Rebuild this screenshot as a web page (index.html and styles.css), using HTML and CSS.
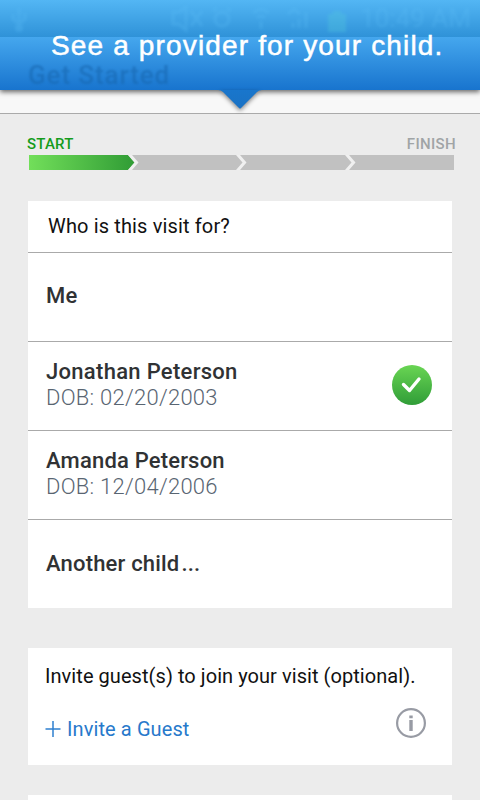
FILE: index.html
```html
<!DOCTYPE html>
<html lang="en">
<head>
<meta charset="utf-8">
<title>Get Started</title>
<link rel="stylesheet" href="styles.css">
</head>
<body>
<header class="header">
  <div class="status">
    <svg class="status-icons" viewBox="0 0 360 37" aria-hidden="true">
      <g fill="none" stroke="#5bbcf6" stroke-width="3">
        <path d="M19 8v22M13 14v5l6 5 6-5v-6"/>
        <path d="M173 12h6l7-5v23l-7-6h-6zM191 11l11 15M202 11l-11 15"/>
        <circle cx="222" cy="19" r="7"/>
        <path d="M213 11l4-3M227 8l4 3"/>
        <path d="M253 13q8-7 16 0M257 18q4-4 8 0M261 21v8"/>
        <path d="M288 14l6-5 6 5M293 28v-5M299 28v-9M306 28v-16"/>
      </g>
      <circle cx="19" cy="28" r="4" fill="#5bbcf6"/>
      <path d="M328 14h5v-3h8v3h5v18h-18z" fill="#56cddc"/>
    </svg>
    <span class="clock">10:49 AM</span>
  </div>
  <div class="titlebar"><h1 class="page-title">Get Started</h1></div>
  <div class="appbar"></div>
  <svg class="pointer" viewBox="0 0 60 30" aria-hidden="true">
    <defs><linearGradient id="tip" x1="0" y1="0" x2="0" y2="1"><stop offset="0" stop-color="#1976cc"/><stop offset="1" stop-color="#1a72c4"/></linearGradient></defs>
    <path d="M8 0h44q-3 0-5 2L31 18q-1 1-2 0L13 2q-2-2-5-2z" fill="url(#tip)"/>
  </svg>
  <p class="banner-text">See a provider for your child.</p>
</header>

<main class="content">
  <div class="labels"><span class="start">START</span><span class="finish">FINISH</span></div>
  <svg class="progress" viewBox="0 0 425 15" aria-hidden="true">
    <defs><linearGradient id="done"><stop offset="0" stop-color="#72df5a"/><stop offset="1" stop-color="#309c35"/></linearGradient></defs>
    <path d="M0 0h425v15H0z" fill="#c1c1c1"/>
    <path d="M0 0h99l6.500 7.500L99 15H0z" fill="url(#done)"/>
    <g fill="#f0f0f0">
      <path d="M99 0h4l6.500 7.500L103 15h-4l6.500-7.500z"/>
      <path d="M207 0h4l6.500 7.500L211 15h-4l6.500-7.500z"/>
      <path d="M316 0h4l6.500 7.500L320 15h-4l6.500-7.500z"/>
    </g>
  </svg>

  <section class="card">
    <h2 class="question">Who is this visit for?</h2>
    <div class="row"><div class="name">Me</div></div>
    <div class="row">
      <div><div class="name jonathan">Jonathan Peterson</div><div class="dob">DOB: 02/20/2003</div></div>
      <svg class="check" viewBox="0 0 40 40" aria-hidden="true">
        <defs><linearGradient id="ok" x1="0" y1="0" x2="0" y2="1"><stop offset="0" stop-color="#69d553"/><stop offset="1" stop-color="#309d38"/></linearGradient></defs>
        <circle cx="20" cy="20" r="20" fill="url(#ok)"/>
        <path d="M11.500 19.500l6 6L27 14" fill="none" stroke="#fff" stroke-width="3.400" stroke-linecap="round" stroke-linejoin="round"/>
      </svg>
    </div>
    <div class="row">
      <div><div class="name">Amanda Peterson</div><div class="dob">DOB: 12/04/2006</div></div>
    </div>
    <div class="row another"><div class="name">Another child<span class="dots">...</span></div></div>
  </section>

  <section class="card invite">
    <p class="invite-text">Invite guest(s) to join your visit (optional).</p>
    <div class="invite-row">
      <a class="invite-link"><svg class="plus" viewBox="0 0 16 16" aria-hidden="true"><path d="M.500 8h15M8 0v16" stroke="#2f80d0" stroke-width="1.500"/></svg>Invite a Guest</a>
      <svg class="info" viewBox="0 0 30 30" aria-hidden="true">
        <circle cx="15" cy="15" r="13.900" fill="none" stroke="#989ba4" stroke-width="2.200"/>
        <path d="M13.300 7.500h3.400v2.700h-3.400zM13.300 12h3.400v11h-3.400z" fill="#989ba4"/>
      </svg>
    </div>
  </section>
  <section class="card next"></section>
</main>
</body>
</html>
```

FILE: styles.css
```css
* { box-sizing: border-box; margin: 0; padding: 0; }
body { width: 480px; height: 800px; overflow: hidden; background: #ececec; font-family: Roboto, sans-serif; }
.header { position: relative; height: 114px; background: #f8f8f8; border-bottom: 1px solid #aaa; }
.status { position: relative; height: 37px; background: linear-gradient(#53b6f4, #2f92d8); }
.status-icons { position: absolute; left: 0; top: 0; width: 360px; height: 37px; opacity: .3; filter: blur(1.4px); }
.clock { position: absolute; right: 9px; top: 7px; font-size: 26px; line-height: 22px; color: #5bbcf6; opacity: .32; filter: blur(1.4px); white-space: nowrap; }
.titlebar { height: 53px; padding: 24px 0 0 28px; background: linear-gradient(#45a7ee, #1874ce); box-shadow: 0 2px 5px rgba(0,0,0,.6); }
.page-title { font-size: 26px; line-height: 28px; font-weight: 500; letter-spacing: .9px; color: #1767b0; opacity: .6; filter: blur(.8px); }
.appbar { height: 23px; }
.pointer { position: absolute; left: 210px; top: 90px; width: 60px; height: 30px; filter: drop-shadow(0 2px 2px rgba(0,0,0,.45)); }
.banner-text { position: absolute; left: 51px; top: 33px; font: 28px/26px "Liberation Sans", sans-serif; letter-spacing: 1.15px; color: #fff; -webkit-text-stroke: .5px #fff; white-space: nowrap; }
.content { padding: 22px 28px 0; }
.labels { display: flex; justify-content: space-between; margin: 0 -4px 0 -1px; height: 19px; font-size: 15px; line-height: 17px; font-weight: 500; }
.start { color: #159c1c; letter-spacing: .2px; }
.finish { color: #a0a4a6; letter-spacing: .35px; }
.progress { display: block; width: 425px; height: 15px; margin-left: 1px; }
.card { background: #fff; margin-top: 31px; }
.question { height: 51px; padding-left: 20px; font-size: 20px; line-height: 50px; font-weight: 400; letter-spacing: .14px; color: #111; }
.row { height: 89px; border-top: 1px solid #aaa; padding: 0 20px 2px 18px; display: flex; align-items: center; justify-content: space-between; }
.another { padding-bottom: 0; }
.name { font-size: 22px; line-height: 26px; font-weight: 500; letter-spacing: .18px; color: #303234; }
.jonathan { letter-spacing: .3px; }
.dots { margin-left: 2px; }
.dob { font-size: 22px; line-height: 26px; font-weight: 300; letter-spacing: .26px; color: #596572; }
.check { width: 40px; height: 40px; }
.invite { height: 117px; margin-top: 40px; padding: 16px 26px 0 17px; }
.invite-text { font-size: 20px; line-height: 25px; letter-spacing: .06px; color: #111; white-space: nowrap; }
.invite-row { display: flex; justify-content: space-between; margin-top: 19px; }
.invite-link { display: flex; align-items: center; gap: 6px; height: 42px; font-size: 20px; letter-spacing: .1px; color: #2779cb; }
.plus { width: 16px; height: 16px; }
.info { width: 30px; height: 30px; }
.next { height: 10px; margin-top: 30px; }
```
